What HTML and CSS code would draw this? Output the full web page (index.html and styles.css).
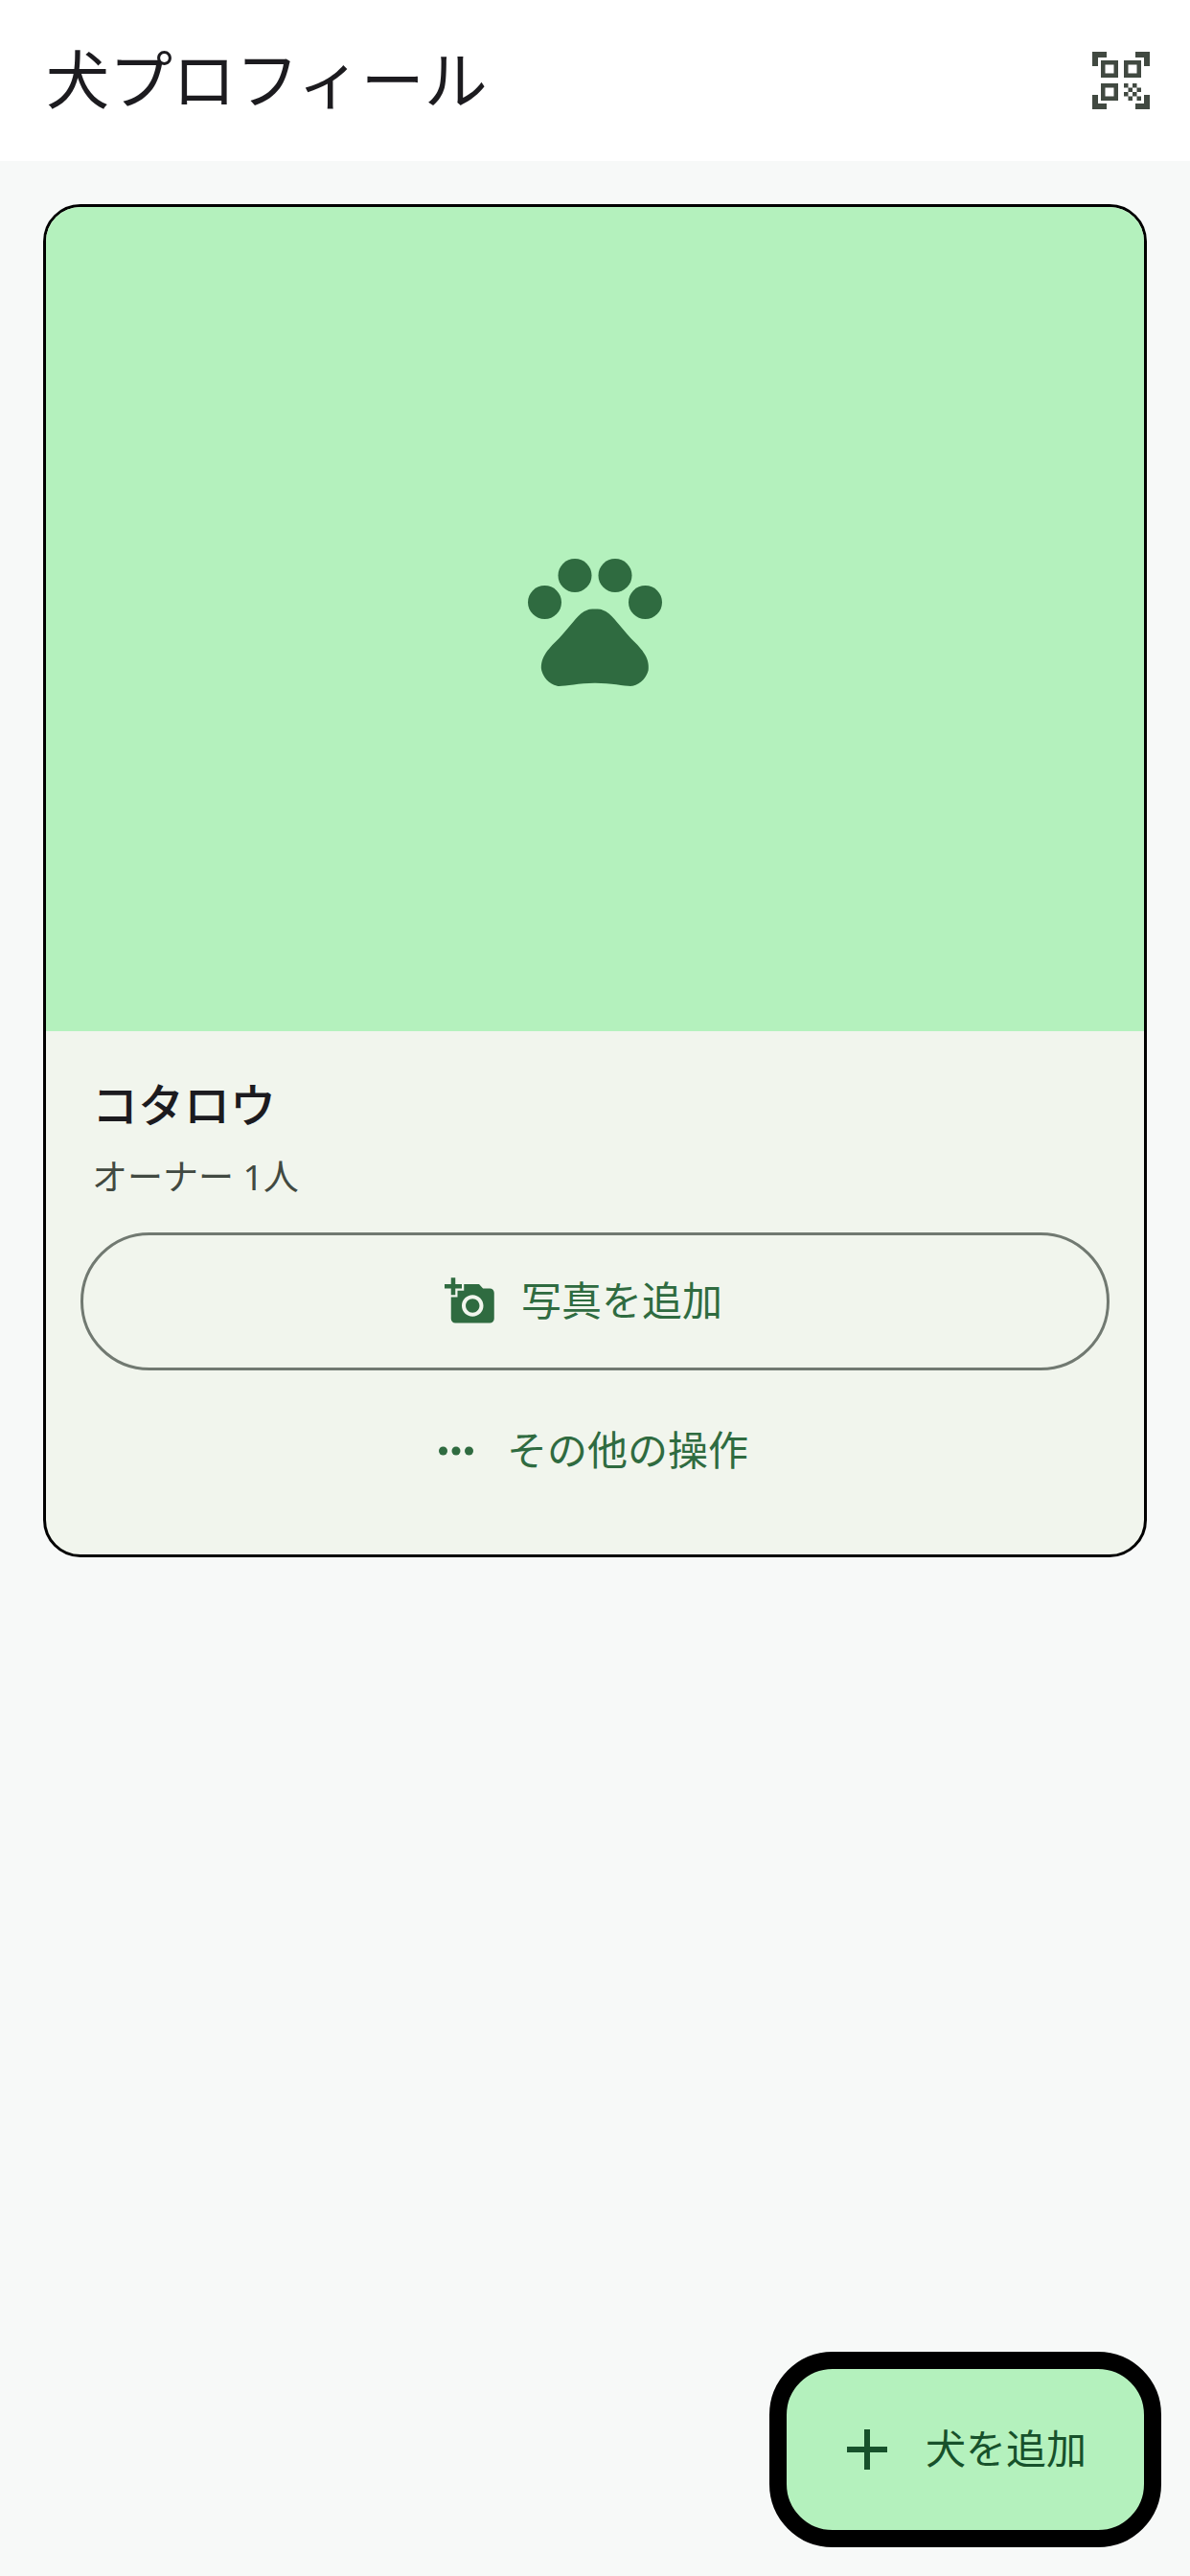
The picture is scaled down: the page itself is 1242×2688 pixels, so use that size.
FILE: index.html
```
<!DOCTYPE html>
<html lang="ja">
<head>
    <meta charset="UTF-8">
    <meta name="viewport" content="width=device-width, initial-scale=1">
    <title>犬プロフィール</title>
    <link rel="stylesheet" href="styles.css">
</head>
<body>
    <header class="app-bar">
        <h1>犬プロフィール</h1>
        <button class="scan-button" type="button" aria-label="QRコード">
            <svg viewBox="0 0 24 24"><path d="M9.500 6.500v3h-3v-3h3M11 5H5v6h6V5zM9.500 14.500v3h-3v-3h3M11 13H5v6h6v-6zM17.500 6.500v3h-3v-3h3M19 5h-6v6h6V5zM13 13h1.500v1.500H13V13zM14.500 14.500H16V16h-1.500v-1.500zM16 13h1.500v1.500H16V13zM13 16h1.500v1.500H13V16zM14.500 17.500H16V19h-1.500v-1.500zM16 16h1.500v1.500H16V16zM17.500 14.500H19V16h-1.500v-1.500zM17.500 17.500H19V19h-1.500v-1.500zM22 7h-2V4h-3V2h5v5zM22 22v-5h-2v3h-3v2h5zM2 22h5v-2H4v-3H2v5zM2 2v5h2V4h3V2H2z"/></svg>
        </button>
    </header>

    <main>
        <article class="dog-card">
            <div class="dog-photo">
                <svg viewBox="0 0 24 24">
                    <circle cx="4.5" cy="9.5" r="2.5"/>
                    <circle cx="9" cy="5.5" r="2.5"/>
                    <circle cx="15" cy="5.5" r="2.5"/>
                    <circle cx="19.5" cy="9.5" r="2.5"/>
                    <path d="M17.34 14.86c-.87-1.02-1.6-1.89-2.48-2.91-.46-.54-1.05-1.08-1.75-1.32-.11-.04-.22-.07-.33-.09-.25-.04-.52-.04-.78-.04s-.53 0-.79.05c-.11.02-.22.05-.33.09-.7.24-1.28.78-1.75 1.32-.87 1.02-1.6 1.89-2.48 2.91-1.31 1.31-2.92 2.76-2.62 4.79.29 1.02 1.02 2.03 2.33 2.32.73.15 3.06-.44 5.54-.44h.18c2.48 0 4.81.58 5.54.44 1.31-.29 2.04-1.31 2.33-2.32.31-2.04-1.3-3.49-2.61-4.8z"/>
                </svg>
            </div>
            <div class="dog-info">
                <h2>コタロウ</h2>
                <p>オーナー 1人</p>
            </div>
            <div class="dog-actions">
                <button class="photo-button" type="button">
                    <svg viewBox="0 0 24 24"><path d="M3 4V1h2v3h3v2H5v3H3V6H0V4h3zm3 6V7h3V4h7l1.83 2H21c1.1 0 2 .9 2 2v12c0 1.100-.9 2-2 2H5c-1.100 0-2-.9-2-2V10h3zm7 9c2.760 0 5-2.240 5-5s-2.240-5-5-5-5 2.240-5 5 2.240 5 5 5zm-3.200-5c0 1.770 1.430 3.200 3.200 3.200s3.200-1.430 3.200-3.200-1.430-3.200-3.200-3.200-3.200 1.430-3.200 3.200z"/></svg>
                    <span class="label">写真を追加</span>
                </button>
                <button class="more-button" type="button">
                    <svg viewBox="0 0 24 24">
                        <circle cx="6" cy="12" r="2"/>
                        <circle cx="12" cy="12" r="2"/>
                        <circle cx="18" cy="12" r="2"/>
                    </svg>
                    <span class="label">その他の操作</span>
                </button>
            </div>
        </article>
    </main>

    <button class="add-button" type="button">
        <svg viewBox="0 0 24 24"><path d="M19 13h-6v6h-2v-6H5v-2h6V5h2v6h6v2z"/></svg>
        <span class="label">犬を追加</span>
    </button>
</body>
</html>
```
FILE: styles.css
```
* { box-sizing: border-box; }
body { margin: 0; min-height: 100vh; background-color: #f7f9f8; color: #1c1b1f; font-family: "Noto Sans CJK JP", sans-serif; }
h1, h2, p { margin: 0; }
button { border: none; background: none; font-family: inherit; font-size: 42px; line-height: 60px; cursor: pointer; }
svg { display: block; flex: none; fill: currentColor; }
.label { padding-bottom: 6px; }

.app-bar { display: flex; align-items: center; justify-content: space-between; height: 168px; padding: 0 36px 0 48px; background-color: white; }
.app-bar h1 { padding-bottom: 10px; font-size: 66px; font-weight: 400; line-height: 84px; }
.scan-button { padding: 0; color: #414941; }
.scan-button svg { width: 72px; height: 72px; }

main { padding: 45px; }
.dog-card { overflow: hidden; border: 3px solid black; border-radius: 39px; background-color: #f1f5ed; }
.dog-photo { display: flex; align-items: center; justify-content: center; aspect-ratio: 4 / 3; background-color: #b4f1bd; color: #2f6b40; }
.dog-photo svg { width: 168px; height: 168px; }
.dog-info { padding: 38px 48px 34px; }
.dog-info h2 { margin-bottom: 18px; font-size: 48px; font-weight: 500; line-height: 72px; }
.dog-info p { color: #414941; font-family: "Noto Sans", "Noto Sans CJK JP", sans-serif; font-size: 37px; line-height: 48px; }

.dog-actions { display: flex; flex-direction: column; gap: 12px; padding: 0 36px 36px; }
.dog-actions button { display: flex; align-items: center; justify-content: center; gap: 26px; height: 144px; border-radius: 72px; color: #2f6b40; }
.dog-actions svg { width: 54px; height: 54px; }
.dog-actions .photo-button { padding: 0 24px 0 0; border: 3px solid #717971; }
.dog-actions .more-button { padding: 0 12px 0 0; }

.add-button { position: fixed; right: 30px; bottom: 30px; display: flex; align-items: center; gap: 25px; height: 204px; padding: 0 60px 0 48px; border: 18px solid black; border-radius: 66px; background-color: #b4f1bd; color: #17512b; }
.add-button svg { width: 72px; height: 72px; }
```
